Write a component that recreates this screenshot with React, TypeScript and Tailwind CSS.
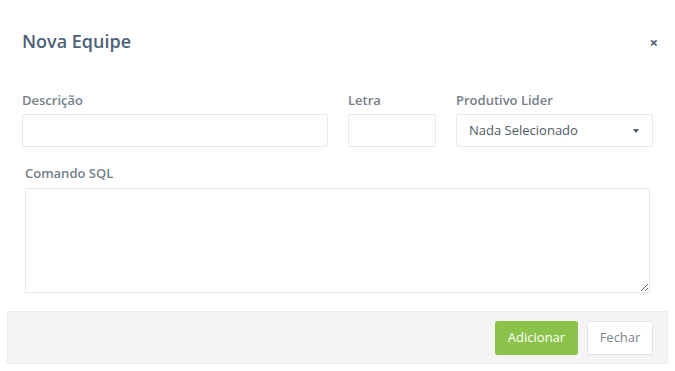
const App = () => {
  return (
    <div className="w-[675px] h-[371px] bg-white font-['Open_Sans',sans-serif] relative overflow-hidden">
      <div className="flex items-center justify-between pl-[22px] pr-[17px] pt-[22px] h-[60px]">
        <h1 className="text-[18px] font-semibold text-[#4e6178] leading-6">Nova Equipe</h1>
        <button className="text-[#4e6178] text-[15px] font-bold leading-none mt-[3px]">×</button>
      </div>

      <div className="flex gap-5 pl-[22px] pt-[31px]">
        <div className="w-[306px] flex flex-col">
          <label className="text-[13px] font-semibold text-[#747f89] leading-[18px] mb-[5px]">Descrição</label>
          <input className="h-[33px] border border-[#e7e9ec] rounded-[2px] outline-none" />
        </div>
        <div className="w-[88px] flex flex-col">
          <label className="text-[13px] font-semibold text-[#747f89] leading-[18px] mb-[5px]">Letra</label>
          <input className="h-[33px] border border-[#e7e9ec] rounded-[2px] outline-none" />
        </div>
        <div className="w-[197px] flex flex-col">
          <label className="text-[13px] font-semibold text-[#747f89] leading-[18px] mb-[5px]">Produtivo Lider</label>
          <div className="h-[33px] border border-[#e7e9ec] rounded-[2px] flex items-center justify-between pl-3 pr-[13px]">
            <span className="text-[13px] text-[#4e5a66]">Nada Selecionado</span>
            <span className="w-0 h-0 border-l-[3.5px] border-r-[3.5px] border-t-[4px] border-l-transparent border-r-transparent border-t-[#4e5a66]" />
          </div>
        </div>
      </div>

      <div className="flex flex-col pl-[25px] pr-[25px] pt-[17px]">
        <label className="text-[13px] font-semibold text-[#747f89] leading-[18px] mb-[6px]">Comando SQL</label>
        <textarea className="h-[105px] border border-[#e7e9ec] outline-none resize-y" />
      </div>

      <div className="mx-[7px] mt-[18px] h-[53px] bg-[#f4f4f4] border border-[#ececec] rounded-[2px] flex items-center justify-end gap-[9px] pr-[14px]">
        <button className="h-[34px] w-[83px] rounded-[3px] bg-[#8bc34a] text-white text-[13px]">Adicionar</button>
        <button className="h-[34px] w-[66px] rounded-[3px] bg-white border border-[#e3e3e3] text-[#7b8590] text-[13px]">Fechar</button>
      </div>
    </div>
  );
};

export default App;
